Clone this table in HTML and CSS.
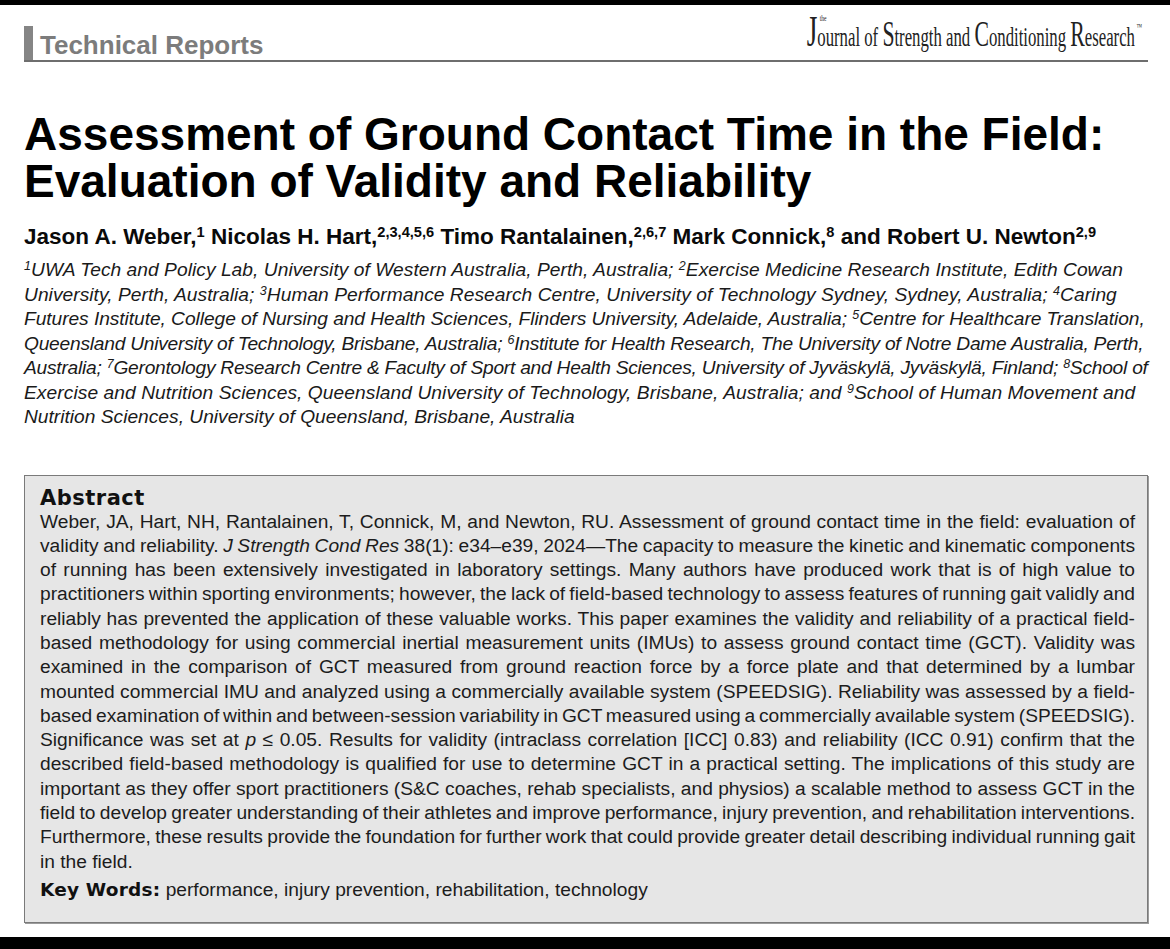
FILE: index.html
```html
<!DOCTYPE html>
<html lang="en">
<head>
<meta charset="utf-8">
<title>Assessment of Ground Contact Time in the Field</title>
<link rel="stylesheet" href="styles.css">
</head>
<body>
<div class="frame">
  <div class="topbar"></div>
  <div class="page">
    <header class="masthead">
      <div class="section-label">Technical Reports</div>
      <div class="journal"><span class="journal-inner"><span class="cap cap-j">J<span class="the">the</span></span>ournal of <span class="cap">S</span>trength and <span class="cap">C</span>onditioning <span class="cap">R</span>esearch<span class="tm">™</span></span></div>
    </header>

    <h1 class="title">Assessment of Ground Contact Time in the Field:<br>Evaluation of Validity and Reliability</h1>

    <p class="authors">Jason A. Weber,<sup>1</sup> Nicolas H. Hart,<sup>2,3,4,5,6</sup> Timo Rantalainen,<sup>2,6,7</sup> Mark Connick,<sup>8</sup> and Robert U. Newton<sup>2,9</sup></p>

    <div class="affil">
      <span class="al al-wide1"><sup>1</sup>UWA Tech and Policy Lab, University of Western Australia, Perth, Australia; <sup>2</sup>Exercise Medicine Research Institute, Edith Cowan</span>
      <span class="al al-wide1">University, Perth, Australia; <sup>3</sup>Human Performance Research Centre, University of Technology Sydney, Sydney, Australia; <sup>4</sup>Caring</span>
      <span class="al al-mid">Futures Institute, College of Nursing and Health Sciences, Flinders University, Adelaide, Australia; <sup>5</sup>Centre for Healthcare Translation,</span>
      <span class="al al-tight">Queensland University of Technology, Brisbane, Australia; <sup>6</sup>Institute for Health Research, The University of Notre Dame Australia, Perth,</span>
      <span class="al al-tight">Australia; <sup>7</sup>Gerontology Research Centre &amp; Faculty of Sport and Health Sciences, University of Jyväskylä, Jyväskylä, Finland; <sup>8</sup>School of</span>
      <span class="al al-wide2">Exercise and Nutrition Sciences, Queensland University of Technology, Brisbane, Australia; and <sup>9</sup>School of Human Movement and</span>
      <span class="al">Nutrition Sciences, University of Queensland, Brisbane, Australia</span>
    </div>

    <section class="abstract">
      <h2 class="abstract-title">Abstract</h2>
      <div class="abs-body">
        <span class="ln">Weber, JA, Hart, NH, Rantalainen, T, Connick, M, and Newton, RU. Assessment of ground contact time in the field: evaluation of</span>
        <span class="ln">validity and reliability. <i>J Strength Cond Res</i> 38(1): e34–e39, 2024—The capacity to measure the kinetic and kinematic components</span>
        <span class="ln">of running has been extensively investigated in laboratory settings. Many authors have produced work that is of high value to</span>
        <span class="ln">practitioners within sporting environments; however, the lack of field-based technology to assess features of running gait validly and</span>
        <span class="ln">reliably has prevented the application of these valuable works. This paper examines the validity and reliability of a practical field-</span>
        <span class="ln">based methodology for using commercial inertial measurement units (IMUs) to assess ground contact time (GCT). Validity was</span>
        <span class="ln">examined in the comparison of GCT measured from ground reaction force by a force plate and that determined by a lumbar</span>
        <span class="ln">mounted commercial IMU and analyzed using a commercially available system (SPEEDSIG). Reliability was assessed by a field-</span>
        <span class="ln">based examination of within and between-session variability in GCT measured using a commercially available system (SPEEDSIG).</span>
        <span class="ln">Significance was set at <i>p</i> ≤ 0.05. Results for validity (intraclass correlation [ICC] 0.83) and reliability (ICC 0.91) confirm that the</span>
        <span class="ln">described field-based methodology is qualified for use to determine GCT in a practical setting. The implications of this study are</span>
        <span class="ln">important as they offer sport practitioners (S&amp;C coaches, rehab specialists, and physios) a scalable method to assess GCT in the</span>
        <span class="ln">field to develop greater understanding of their athletes and improve performance, injury prevention, and rehabilitation interventions.</span>
        <span class="ln">Furthermore, these results provide the foundation for further work that could provide greater detail describing individual running gait</span>
        <span class="ln ln-last">in the field.</span>
      </div>
      <p class="keywords"><b class="kw-label">Key Words:</b> performance, injury prevention, rehabilitation, technology</p>
    </section>
  </div>
  <div class="bottombar"></div>
</div>
</body>
</html>
```

FILE: styles.css
```css
* { box-sizing: border-box; }

html, body {
  margin: 0;
  padding: 0;
  background: #ffffff;
}

body {
  font-family: "Liberation Sans", Arial, sans-serif;
  color: #111111;
}

.frame {
  height: 949px;
  display: flex;
  flex-direction: column;
  overflow: hidden;
}

.topbar {
  flex: none;
  height: 5px;
  background: #000000;
}

.page {
  flex: none;
  padding: 0 22px 0 24px;
}

/* ---------- masthead ---------- */
.masthead {
  display: flex;
  justify-content: space-between;
  align-items: flex-end;
  height: 57px;
  border-bottom: 2px solid #6e6e6e;
}

.section-label {
  height: 34px;
  border-left: 9px solid #858585;
  padding: 5px 0 0 7px;
  font-size: 26px;
  line-height: 29px;
  font-weight: bold;
  color: #7c7c7c;
  white-space: nowrap;
}

.journal {
  margin: 0 6px 6px 0;
  font-family: "Liberation Serif", "Times New Roman", serif;
  font-size: 27px;
  line-height: 1;
  color: #222222;
  white-space: nowrap;
}

.journal-inner {
  display: inline-block;
  transform: scaleX(0.62);
  transform-origin: right bottom;
}

.cap {
  font-size: 35px;
  line-height: 1;
}

.cap-j {
  position: relative;
  font-size: 44px;
}

.the {
  position: absolute;
  left: calc(100% + 4px);
  top: 7px;
  font-size: 9px;
  line-height: 1;
}

.tm {
  font-size: 9px;
  vertical-align: 16px;
  margin-left: 3px;
}

/* ---------- title block ---------- */
.title {
  margin: 49px 0 0;
  font-size: 46px;
  line-height: 47px;
  font-weight: bold;
  color: #000000;
  white-space: nowrap;
}

.authors {
  margin: 19px 0 0;
  font-size: 22.5px;
  line-height: 26px;
  font-weight: bold;
  color: #0a0a0a;
  white-space: nowrap;
}

.authors sup,
.affil sup {
  font-size: 0.65em;
  line-height: 0;
  vertical-align: 0.5em;
}

.affil {
  margin: 8px 0 0;
  font-size: 19.2px;
  line-height: 24.5px;
  font-style: italic;
  color: #1a1a1a;
  white-space: nowrap;
}

.al {
  display: block;
}

.al-wide1 {
  letter-spacing: 0.04px;
}

.al-wide2 {
  letter-spacing: 0.07px;
}

.al-mid {
  letter-spacing: -0.06px;
}

.al-tight {
  letter-spacing: -0.24px;
}

/* ---------- abstract ---------- */
.abstract {
  margin-top: 45px;
  background: #e6e6e6;
  border: 1px solid #7a7a7a;
  box-shadow: 1px 1px 0 #9c9c9c;
  padding: 10px 12px 20px 15px;
}

.abstract-title {
  margin: 0;
  font-family: "DejaVu Sans", "Liberation Sans", sans-serif;
  font-size: 21px;
  line-height: 24px;
  font-weight: bold;
  letter-spacing: 0.5px;
  color: #111111;
}

.abs-body {
  font-size: 19.2px;
  line-height: 24.3px;
  color: #1c1c1c;
}

.ln {
  display: block;
  text-align: justify;
  text-align-last: justify;
  word-spacing: -4px;
}

.ln-last {
  text-align-last: left;
  word-spacing: 0;
}

.keywords {
  margin: 4px 0 0;
  font-size: 19.2px;
  line-height: 24.3px;
  color: #1c1c1c;
}

.kw-label {
  font-family: "DejaVu Sans", "Liberation Sans", sans-serif;
  font-size: 18.5px;
  font-weight: bold;
  letter-spacing: 0.2px;
  color: #111111;
}

/* ---------- bottom ---------- */
.bottombar {
  flex: none;
  margin-top: auto;
  height: 12px;
  background: #000000;
}
```
